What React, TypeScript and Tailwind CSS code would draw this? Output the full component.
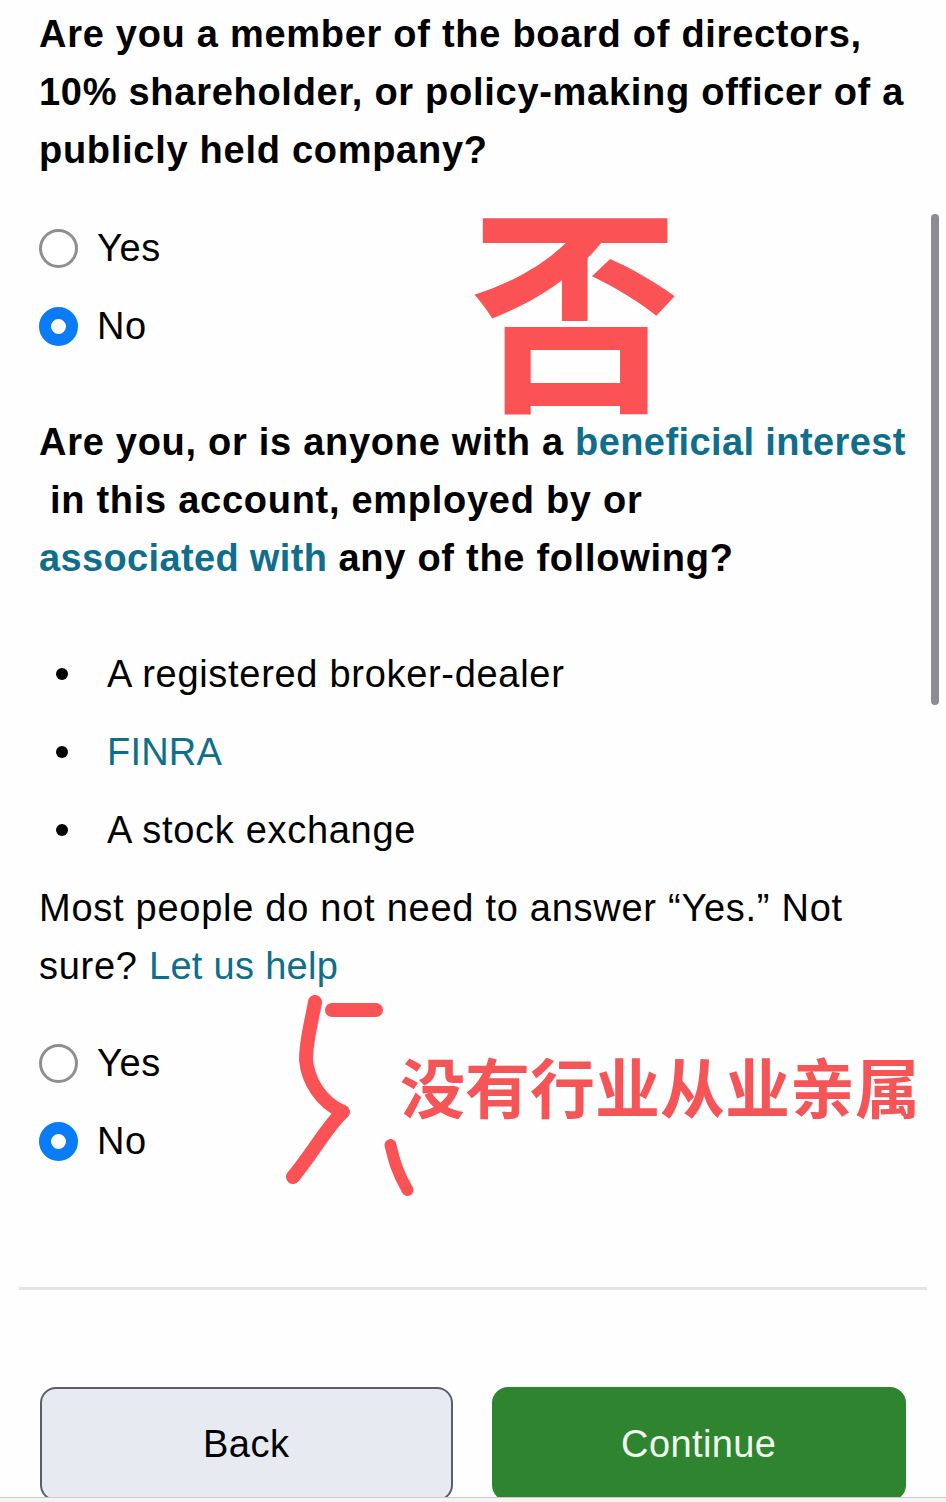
const font = { fontFamily: '"Liberation Sans", "Noto Sans CJK SC", sans-serif' }

function Radio({ label, checked }: { label: string; checked?: boolean }) {
  return (
    <div className="flex h-[78px] items-center">
      {checked ? (
        <span className="h-[39px] w-[39px] rounded-full border-[12px] border-[#0a7cf7] bg-white" />
      ) : (
        <span className="h-[39px] w-[39px] rounded-full border-[3px] border-[#8f8f8f] bg-white" />
      )}
      <span className="ml-[19px] text-[38px] tracking-[0.6px] text-black">{label}</span>
    </div>
  )
}

function Bullet({ children }: { children: React.ReactNode }) {
  return (
    <li className="flex h-[78px] items-center text-[38px] tracking-[0.7px]">
      <span className="ml-[17px] h-3 w-3 rounded-full bg-black" />
      <span className="ml-[39px]">{children}</span>
    </li>
  )
}

export default function App() {
  return (
    <div style={font} className="relative h-[1502px] w-[946px] overflow-hidden bg-[#fefefe] text-black">
      <div className="px-[39px] pt-[5px]">
        <h2 className="w-[880px] text-[38px] leading-[58px] font-bold tracking-[0.72px]">
          Are you a member of the board of directors, 10% shareholder, or policy-making officer of a publicly held company?
        </h2>
        <div className="mt-[30px]">
          <Radio label="Yes" />
          <Radio label="No" checked />
        </div>
        <h2 className="mt-[48px] w-[880px] text-[38px] leading-[58px] font-bold tracking-[0.72px]">
          Are you, or is anyone with a <span className="tracking-[0.4px] text-[#0f6e8c]">beneficial interest</span>
          <br />
          <span className="ml-[11px]">in this account, employed by or</span>
          <br />
          <span className="tracking-[0.35px] text-[#0f6e8c]">associated with</span> any of the following?
        </h2>
        <ul className="mt-[48px]">
          <Bullet>A registered broker-dealer</Bullet>
          <Bullet><span className="tracking-[0.2px] text-[#0f6e8c]">FINRA</span></Bullet>
          <Bullet>A stock exchange</Bullet>
        </ul>
        <p className="mt-[10px] w-[860px] text-[38px] leading-[58px] tracking-[0.73px]">
          Most people do not need to answer “Yes.” Not sure? <span className="tracking-[0.3px] text-[#0f6e8c]">Let us help</span>
        </p>
        <div className="mt-[29px]">
          <Radio label="Yes" />
          <Radio label="No" checked />
        </div>
      </div>

      <div className="mx-[19px] mt-[107px] h-[3px] bg-[#e3e4e6]" />

      <div className="mt-[97px] flex gap-[39px] px-[40px]">
        <button className="flex h-[114px] w-[414px] items-center justify-center rounded-[16px] border-2 border-[#5a5f6b] bg-[#e7eaf0] text-[38px] tracking-[0.5px] text-black">
          Back
        </button>
        <button className="flex h-[114px] w-[416px] items-center justify-center rounded-[16px] bg-[#2f842f] text-[38px] tracking-[0.4px] text-[#f2fbf0]">
          Continue
        </button>
      </div>

      <div className="absolute inset-x-0 bottom-0 h-[5px] border-t border-[#c9cbce] bg-[#f4f4f5]" />

      {/* scrollbar */}
      <div className="absolute top-[214px] left-[931px] h-[491px] w-2 rounded-full bg-[#8b8d90]" />

      {/* red annotations on the screenshot */}
      <span
        style={{ fontFamily: '"Noto Sans CJK SC", sans-serif' }}
        className="absolute top-[139px] left-[468px] scale-x-[0.98] scale-y-[1.03] text-[214px] leading-[320px] font-bold text-[#fb5355]"
      >
        否
      </span>
      <span
        style={{ fontFamily: '"Noto Sans CJK SC", sans-serif' }}
        className="absolute top-[1045px] left-[400px] text-[65px] leading-[80px] font-bold whitespace-nowrap text-[#f65558]"
      >
        没有行业从业亲属
      </span>
      <svg className="absolute top-[990px] left-[270px]" width="160" height="220" viewBox="0 0 160 220" fill="none" stroke="#fb5355" strokeLinecap="round" strokeLinejoin="round">
        <path d="M45 12 C42 30 36 50 36 70 C38 90 50 112 73 122 C58 135 45 160 23 187" strokeWidth="14" />
        <path d="M62 20 H106" strokeWidth="14" />
        <path d="M120.5 155 C124 170 127 182 137.5 200" strokeWidth="12" />
      </svg>
    </div>
  )
}
